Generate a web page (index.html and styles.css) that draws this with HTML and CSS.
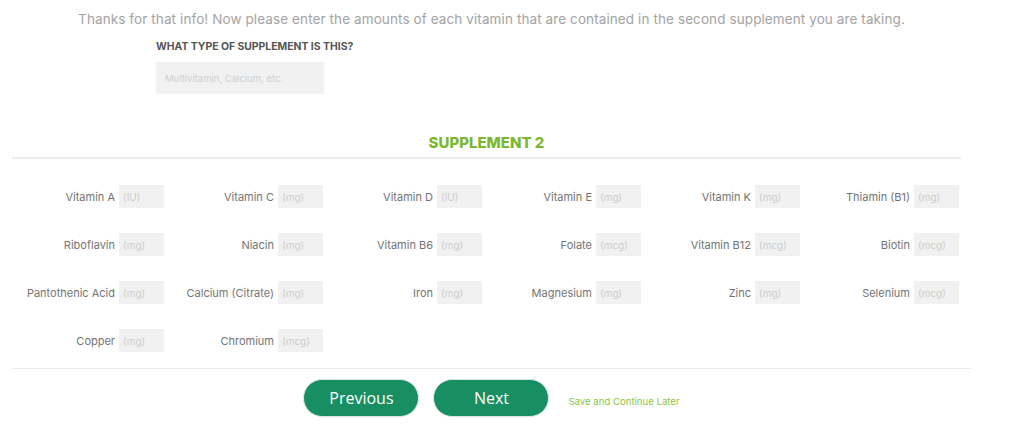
FILE: index.html
```html
<!DOCTYPE html>
<html lang="en">
<head>
<meta charset="utf-8">
<title>Supplement 2</title>
<link rel="stylesheet" href="styles.css">
</head>
<body>
<div class="wrap">
  <p class="intro">Thanks for that info! Now please enter the amounts of each vitamin that are contained in the second supplement you are taking.</p>
  <div class="question">
    <label class="q-label" for="stype">WHAT TYPE OF SUPPLEMENT IS THIS?</label>
    <input id="stype" class="q-input" type="text" placeholder="Multivitamin, Calcium, etc.">
  </div>
  <h2 class="heading">SUPPLEMENT 2</h2>
  <div class="grid">
    <div class="cell"><span class="lbl">Vitamin A</span><input class="amt" placeholder="(IU)"></div>
    <div class="cell"><span class="lbl">Vitamin C</span><input class="amt" placeholder="(mg)"></div>
    <div class="cell"><span class="lbl">Vitamin D</span><input class="amt" placeholder="(IU)"></div>
    <div class="cell"><span class="lbl">Vitamin E</span><input class="amt" placeholder="(mg)"></div>
    <div class="cell"><span class="lbl">Vitamin K</span><input class="amt" placeholder="(mg)"></div>
    <div class="cell"><span class="lbl">Thiamin (B1)</span><input class="amt" placeholder="(mg)"></div>
    <div class="cell"><span class="lbl">Riboflavin</span><input class="amt" placeholder="(mg)"></div>
    <div class="cell"><span class="lbl">Niacin</span><input class="amt" placeholder="(mg)"></div>
    <div class="cell"><span class="lbl">Vitamin B6</span><input class="amt" placeholder="(mg)"></div>
    <div class="cell"><span class="lbl">Folate</span><input class="amt" placeholder="(mcg)"></div>
    <div class="cell"><span class="lbl">Vitamin B12</span><input class="amt" placeholder="(mcg)"></div>
    <div class="cell"><span class="lbl">Biotin</span><input class="amt" placeholder="(mcg)"></div>
    <div class="cell"><span class="lbl">Pantothenic Acid</span><input class="amt" placeholder="(mg)"></div>
    <div class="cell"><span class="lbl">Calcium (Citrate)</span><input class="amt" placeholder="(mg)"></div>
    <div class="cell"><span class="lbl">Iron</span><input class="amt" placeholder="(mg)"></div>
    <div class="cell"><span class="lbl">Magnesium</span><input class="amt" placeholder="(mg)"></div>
    <div class="cell"><span class="lbl">Zinc</span><input class="amt" placeholder="(mg)"></div>
    <div class="cell"><span class="lbl">Selenium</span><input class="amt" placeholder="(mcg)"></div>
    <div class="cell"><span class="lbl">Copper</span><input class="amt" placeholder="(mg)"></div>
    <div class="cell"><span class="lbl">Chromium</span><input class="amt" placeholder="(mcg)"></div>
  </div>
  <div class="actions">
    <button class="btn" type="button">Previous</button>
    <button class="btn" type="button">Next</button>
    <a class="save" href="#">Save and Continue Later</a>
  </div>
</div>
</body>
</html>
```
FILE: styles.css
```css
html, body {
  margin: 0;
  padding: 0;
  background: #ffffff;
}
body {
  font-family: Inter, "Noto Sans", "DejaVu Sans", sans-serif;
}
.wrap {
  margin-left: 12px;
  width: 959px;
}
.intro {
  margin: 0;
  padding-top: 10px;
  font-size: 13.5px;
  line-height: 18px;
  text-align: center;
  color: #a3a3a3;
  letter-spacing: 0.1px;
}
.question {
  margin: 13px 0 0 144px;
  display: flex;
  flex-direction: column;
  align-items: flex-start;
}
.q-label {
  font-size: 10.4px;
  line-height: 12px;
  font-weight: 700;
  color: #555555;
}
.q-input {
  margin-top: 9px;
  box-sizing: border-box;
  width: 168px;
  height: 32px;
  border: none;
  background: #f1f1f1;
  padding: 0 9px;
  font-family: inherit;
  font-size: 9.5px;
  outline: none;
}
.q-input::placeholder { color: #cfcfcf; }
.heading {
  margin: 39px 0 0;
  width: 949px;
  font-size: 15px;
  line-height: 20px;
  font-weight: 800;
  text-align: center;
  color: #7cb82f;
  padding-bottom: 4px;
  border-bottom: 2px solid #ececec;
}
.grid {
  margin-top: 26px;
  display: grid;
  grid-template-columns: repeat(6, 159px);
  grid-auto-rows: 23px;
  row-gap: 25px;
}
.cell {
  display: flex;
  justify-content: flex-end;
  align-items: center;
  gap: 4px;
  padding-right: 7px;
}
.lbl {
  font-size: 11px;
  color: #747474;
  white-space: nowrap;
}
.amt {
  box-sizing: border-box;
  width: 45px;
  height: 23px;
  border: none;
  background: #f1f1f1;
  padding: 0 4px;
  font-family: inherit;
  font-size: 10px;
  outline: none;
}
.amt::placeholder { color: #cccccc; }
.actions {
  margin-top: 16px;
  border-top: 1px solid #ebebeb;
  padding-top: 10px;
  display: flex;
  justify-content: center;
  align-items: center;
  gap: 14px;
}
.btn {
  box-sizing: border-box;
  width: 116px;
  height: 38px;
  border-radius: 19px;
  border: 1px solid #d8e6df;
  background: #188f63;
  color: #ffffff;
  font-family: "Open Sans", sans-serif;
  font-size: 16px;
  cursor: pointer;
}
.save {
  margin-left: 5px;
  margin-top: 6px;
  font-size: 9.6px;
  color: #8cc63f;
  text-decoration: none;
}
```
